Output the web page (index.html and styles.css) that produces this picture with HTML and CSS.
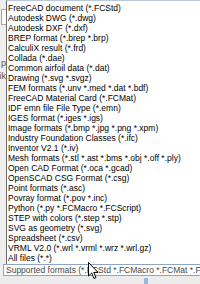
FILE: index.html
```html
<!DOCTYPE html>
<html>
<head>
<meta charset="utf-8">
<link rel="stylesheet" href="styles.css">
</head>
<body>
<div class="screen">
  <div class="upper">
    <div class="behind">
      <div class="field"></div>
      <div class="frag f1">p</div>
      <div class="frag f2">ik</div>
    </div>
    <ul class="list">
      <li>FreeCAD document (*.FCStd)</li>
      <li>Autodesk DWG (*.dwg)</li>
      <li>Autodesk DXF (*.dxf)</li>
      <li>BREP format (*.brep *.brp)</li>
      <li>CalculiX result (*.frd)</li>
      <li>Collada (*.dae)</li>
      <li>Common airfoil data (*.dat)</li>
      <li>Drawing (*.svg *.svgz)</li>
      <li>FEM formats (*.unv *.med *.dat *.bdf)</li>
      <li>FreeCAD Material Card (*.FCMat)</li>
      <li>IDF emn file File Type (*.emn)</li>
      <li>IGES format (*.iges *.igs)</li>
      <li>Image formats (*.bmp *.jpg *.png *.xpm)</li>
      <li>Industry Foundation Classes (*.ifc)</li>
      <li>Inventor V2.1 (*.iv)</li>
      <li>Mesh formats (*.stl *.ast *.bms *.obj *.off *.ply)</li>
      <li>Open CAD Format (*.oca *.gcad)</li>
      <li>OpenSCAD CSG Format (*.csg)</li>
      <li>Point formats (*.asc)</li>
      <li>Povray format (*.pov *.inc)</li>
      <li>Python (*.py *.FCMacro *.FCScript)</li>
      <li>STEP with colors (*.step *.stp)</li>
      <li>SVG as geometry (*.svg)</li>
      <li>Spreadsheet (*.csv)</li>
      <li>VRML V2.0 (*.wrl *.vrml *.wrz *.wrl.gz)</li>
      <li>All files (*.*)</li>
    </ul>
  </div>
  <div class="combo">Supported formats (*.FCStd *.FCMacro *.FCMat *.FCScript *.csv)</div>
  <div class="footer">
    <div class="blue"></div>
  </div>
  <svg class="cursor" width="12" height="18" viewBox="0 0 12 18">
    <path d="M0.5 0.5 L0.5 14 L3.7 11 L6 16.5 L8 15.6 L5.8 10.4 L10 10.4 Z" fill="#fff" stroke="#000" stroke-width="1"/>
  </svg>
</div>
</body>
</html>
```
FILE: styles.css
```css
html, body {
  margin: 0;
  padding: 0;
}
body {
  background: #f0f0f0;
  font-family: "Liberation Sans", Arial, sans-serif;
  overflow: hidden;
}
.screen {
  position: relative;
  width: 200px;
  height: 284px;
  overflow: hidden;
  display: flex;
  flex-direction: column;
}
.upper {
  display: flex;
  height: 264px;
}
.behind {
  width: 6px;
  flex: none;
  position: relative;
  background: #eeeeee;
  font-size: 9px;
  color: #555;
}
.field {
  margin-top: 9px;
  margin-left: 1px;
  height: 14px;
  border: 1px solid #a8a8a8;
  border-right: none;
  background: #fafafa;
}
.frag {
  position: absolute;
  right: 0;
  line-height: 10px;
}
.f1 { top: 58px; }
.f2 { top: 71px; }
.list {
  list-style: none;
  margin: 0;
  padding: 2px 0 0 1px;
  flex: 1;
  background: #fff;
  border-left: 1px solid #6a6a6a;
  border-top: 1px solid #b9c9da;
  font-size: 8.5px;
  color: #000;
  white-space: nowrap;
  overflow: hidden;
}
.list li {
  height: 10px;
  line-height: 10px;
}
.combo {
  margin-left: 3px;
  height: 10px;
  line-height: 10px;
  border: 1px solid #8fa6c0;
  border-right: none;
  background: #fdfdfd;
  color: #4a4a4a;
  font-size: 8.5px;
  padding-left: 2px;
  white-space: nowrap;
  overflow: hidden;
}
.footer {
  flex: 1;
  position: relative;
  background: #ececec;
}
.blue {
  position: absolute;
  left: 144px;
  top: 2px;
  width: 4px;
  height: 8px;
  background: #9ab8dc;
}
.cursor {
  position: absolute;
  left: 88px;
  top: 262px;
}
```
